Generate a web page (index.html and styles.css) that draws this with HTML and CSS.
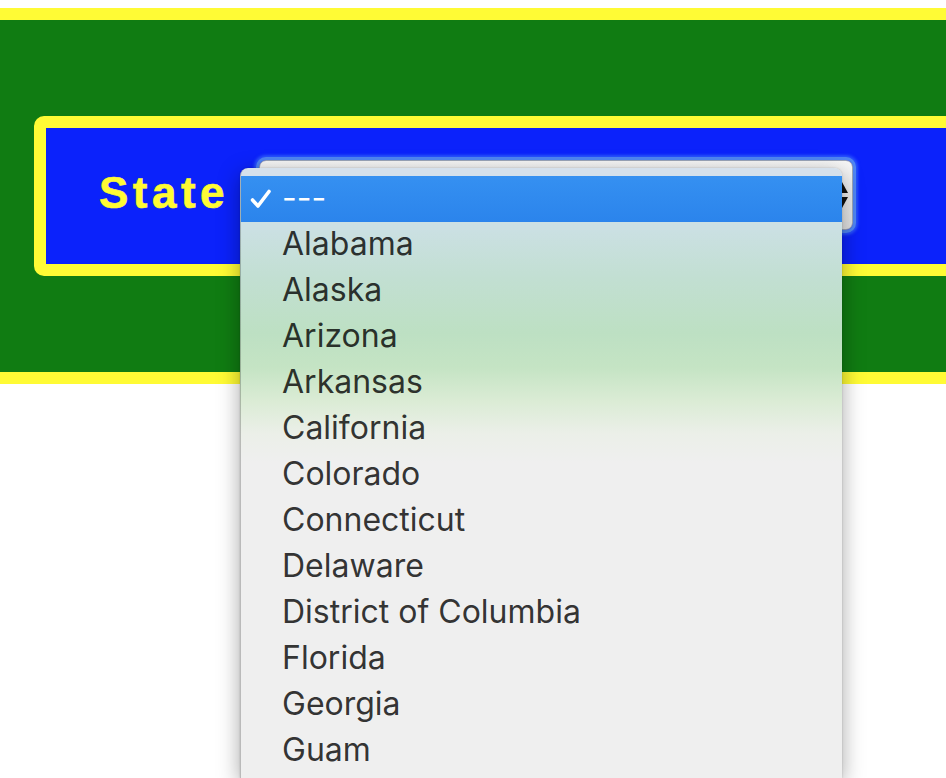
FILE: index.html
```html
<!DOCTYPE html>
<html lang="en">
<head>
<meta charset="utf-8">
<title>State selector</title>
<link rel="stylesheet" href="styles.css">
</head>
<body>
  <header class="banner">
    <form class="panel">
      <label class="label" for="state">State</label>
      <div class="select" id="state">
        <span class="select-value">---</span>
        <svg class="arrows" width="14" height="32" viewBox="0 0 14 32" aria-hidden="true">
          <polygon points="1,14 13,14 7,3" fill="#111"/>
          <polygon points="1,18 13,18 7,29" fill="#111"/>
        </svg>
      </div>
    </form>
  </header>

  <ul class="menu" role="listbox">
    <li class="option selected">
      <span class="check">
        <svg width="22" height="20" viewBox="0 0 22 20" aria-hidden="true">
          <polyline points="2.5,11 8,17 19,2.5" fill="none" stroke="#fff" stroke-width="3.6" stroke-linecap="round" stroke-linejoin="round"/>
        </svg>
      </span><span class="text">---</span></li>
    <li class="option"><span class="check"></span><span class="text">Alabama</span></li>
    <li class="option"><span class="check"></span><span class="text">Alaska</span></li>
    <li class="option"><span class="check"></span><span class="text">Arizona</span></li>
    <li class="option"><span class="check"></span><span class="text">Arkansas</span></li>
    <li class="option"><span class="check"></span><span class="text">California</span></li>
    <li class="option"><span class="check"></span><span class="text">Colorado</span></li>
    <li class="option"><span class="check"></span><span class="text">Connecticut</span></li>
    <li class="option"><span class="check"></span><span class="text">Delaware</span></li>
    <li class="option"><span class="check"></span><span class="text">District of Columbia</span></li>
    <li class="option"><span class="check"></span><span class="text">Florida</span></li>
    <li class="option"><span class="check"></span><span class="text">Georgia</span></li>
    <li class="option"><span class="check"></span><span class="text">Guam</span></li>
  </ul>
</body>
</html>
```

FILE: styles.css
```css
html, body {
  margin: 0;
  padding: 0;
  overflow: hidden;
  height: 100%;
  background: #ffffff;
}

body {
  padding-top: 8px;
  box-sizing: border-box;
  position: relative;
  font-family: "Liberation Sans", Arial, sans-serif;
}

.banner {
  background: #107c12;
  border-top: 12px solid #fffb35;
  border-bottom: 12px solid #fffb35;
  padding: 96px 0 96px 34px;
  overflow: hidden;
}

.panel {
  display: flex;
  align-items: center;
  height: 136px;
  margin: 0 -60px 0 0;
  border: 12px solid #fffb35;
  border-radius: 10px;
  background: #0b22fb;
}

.label {
  padding-left: 53px;
  margin-right: 30px;
  color: #fffb35;
  font-family: "Liberation Sans", Arial, sans-serif;
  font-weight: bold;
  font-size: 44px;
  letter-spacing: 4.5px;
  margin-top: -6px;
  -webkit-text-stroke: 0.6px #fffb35;
}

.select {
  display: flex;
  align-items: center;
  justify-content: flex-end;
  box-sizing: border-box;
  width: 594px;
  height: 70px;
  margin-top: -2px;
  padding-right: 3px;
  border: 1px solid #9aa4b8;
  border-radius: 7px;
  background: linear-gradient(#f7f7f7, #e2e2e2);
  box-shadow: 0 0 0 3px #4f86f3, 0 0 3px 5px rgba(70, 130, 255, 0.55);
}

.select-value {
  flex: 1;
  visibility: hidden;
}

.arrows {
  display: block;
}

.menu {
  position: absolute;
  left: 240px;
  top: 168px;
  width: 602px;
  height: 610px;
  margin: 0;
  padding: 8px 0 0 0;
  box-sizing: border-box;
  list-style: none;
  overflow: hidden;
  border-radius: 8px 8px 0 0;
  border-left: 1px solid rgba(0, 0, 0, 0.22);
  background: linear-gradient(180deg,
    #d5e0ec 0px,
    #cbe0e3 60px,
    #c2dfd2 110px,
    #bde0c3 165px,
    #c5e4c4 200px,
    #dcecd6 235px,
    #ebefe8 265px,
    #efefef 295px,
    #efefef 100%);
  box-shadow: 0 6px 22px rgba(0, 0, 0, 0.35), 0 0 2px rgba(0, 0, 0, 0.2);
  font-family: Inter, "Open Sans", sans-serif;
  font-size: 32px;
}

.option {
  display: flex;
  align-items: center;
  height: 46px;
  color: rgba(0, 0, 0, 0.8);
  white-space: nowrap;
}

.option .text {
  margin-top: -4px;
}

.option.selected {
  background: linear-gradient(#3590f1, #2b84ec);
  color: #ffffff;
}

.check {
  display: flex;
  align-items: center;
  width: 41px;
  padding-left: 9px;
  box-sizing: border-box;
  flex: none;
}

.check svg {
  display: block;
}
```
